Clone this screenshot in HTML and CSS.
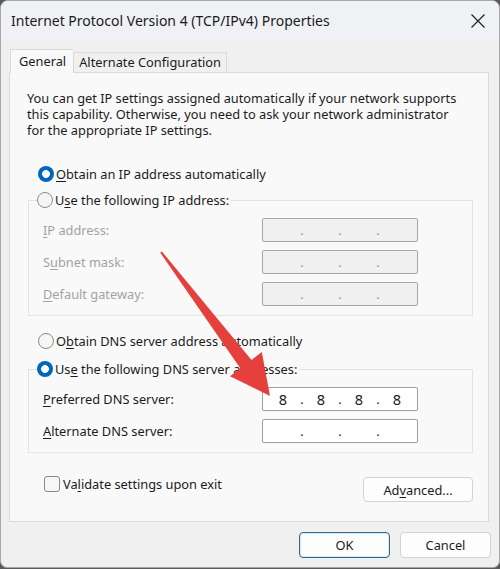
FILE: index.html
```html
<!DOCTYPE html>
<html>
<head>
<meta charset="utf-8">
<link rel="stylesheet" href="styles.css">
</head>
<body>
<div class="window">
  <div class="titlebar">
    <span class="title">Internet Protocol Version 4 (TCP/IPv4) Properties</span>
    <svg class="close" width="14" height="14" viewBox="0 0 14 14"><path d="M0.5 0.5 L13.5 13.5 M13.5 0.5 L0.5 13.5" stroke="#1b1b1b" stroke-width="1.1" fill="none"/></svg>
  </div>
  <div class="tabs">
    <div class="tab active">General</div>
    <div class="tab">Alternate Configuration</div>
  </div>
  <div class="panel">
    <p class="intro">You can get IP settings assigned automatically if your network supports<br>this capability. Otherwise, you need to ask your network administrator<br>for the appropriate IP settings.</p>
    <div class="option first"><span class="radio on"></span><span><u>O</u>btain an IP address automatically</span></div>
    <fieldset class="group">
      <legend><span class="radio"></span><span>U<u>s</u>e the following IP address:</span></legend>
      <div class="field disabled"><span><u>I</u>P address:</span><div class="ip"><span class="oct"></span><span class="dot">.</span><span class="oct"></span><span class="dot">.</span><span class="oct"></span><span class="dot">.</span><span class="oct"></span></div></div>
      <div class="field disabled"><span>S<u>u</u>bnet mask:</span><div class="ip"><span class="oct"></span><span class="dot">.</span><span class="oct"></span><span class="dot">.</span><span class="oct"></span><span class="dot">.</span><span class="oct"></span></div></div>
      <div class="field disabled"><span><u>D</u>efault gateway:</span><div class="ip"><span class="oct"></span><span class="dot">.</span><span class="oct"></span><span class="dot">.</span><span class="oct"></span><span class="dot">.</span><span class="oct"></span></div></div>
    </fieldset>
    <div class="option dns"><span class="radio"></span><span>O<u>b</u>tain DNS server address automatically</span></div>
    <fieldset class="group g2">
      <legend><span class="radio on"></span><span>Us<u>e</u> the following DNS server addresses:</span></legend>
      <div class="field"><span><u>P</u>referred DNS server:</span><div class="ip"><span class="oct">8</span><span class="dot">.</span><span class="oct">8</span><span class="dot">.</span><span class="oct">8</span><span class="dot">.</span><span class="oct">8</span></div></div>
      <div class="field"><span><u>A</u>lternate DNS server:</span><div class="ip"><span class="oct"></span><span class="dot">.</span><span class="oct"></span><span class="dot">.</span><span class="oct"></span><span class="dot">.</span><span class="oct"></span></div></div>
    </fieldset>
    <div class="bottom-row">
      <div class="check-row"><span class="checkbox"></span><span>Va<u>l</u>idate settings upon exit</span></div>
      <button class="btn adv">Ad<u>v</u>anced...</button>
    </div>
  </div>
  <div class="footer">
    <button class="btn ok">OK</button>
    <button class="btn">Cancel</button>
  </div>
  <svg class="arrow" width="500" height="569" viewBox="0 0 500 569">
    <polygon points="161.8,251.4 251.5,359.9 261.8,352 270,396 230,376.2 240.3,368.3 160.2,252.6" fill="#e5403b"/>
  </svg>
</div>
</body>
</html>
```
FILE: styles.css
```css
* { box-sizing: border-box; }
html, body { margin: 0; padding: 0; }
body {
  width: 500px;
  height: 569px;
  background: #5a5a5a;
  font-family: "Noto Sans", "Open Sans", sans-serif;
  font-size: 12.8px;
  color: #1b1b1b;
}
.window {
  position: relative;
  width: 500px;
  height: 568px;
  background: #f0f0f0;
  border: 1px solid #a8a8a8;
  border-radius: 8px 8px 7px 7px;
  overflow: hidden;
}
.titlebar {
  height: 39px;
  display: flex;
  align-items: center;
  justify-content: space-between;
  padding: 0 14px 0 10px;
  background: #eff1f4;
}
.title { font-size: 14px; }
.tabs {
  display: flex;
  align-items: flex-end;
  padding-left: 9px;
  margin-top: 9px;
  height: 23px;
}
.tab {
  height: 20px;
  padding: 0 5px;
  line-height: 19px;
  border: 1px solid #dadada;
  border-bottom: none;
  background: #f0f0f0;
}
.tab.active {
  height: 24px;
  margin-bottom: -1px;
  padding: 0 7px 0 8px;
  line-height: 22px;
  background: #f9f9f9;
  position: relative;
  z-index: 1;
  border-right: none;
}
.panel {
  margin: 0 10px 0 8px;
  height: 450px;
  background: #f9f9f9;
  border: 1px solid #dadada;
  padding-top: 17px;
}
.intro {
  margin: 0;
  padding-left: 17px;
  line-height: 16px;
  height: 48px;
}
.option {
  display: flex;
  align-items: center;
  height: 16px;
  padding-left: 28px;
  gap: 2px;
}
.option.first { margin-top: 28px; }
.option.dns { margin-top: 17px; }
.radio {
  width: 16px;
  height: 16px;
  border-radius: 50%;
  border: 1px solid #8a8a8a;
  background: #f6f6f6;
  flex: none;
}
.radio.on {
  border: none;
  background: radial-gradient(circle, #ffffff 0 3.6px, #0067c0 4.2px);
}
.group {
  margin: 10px 15px 0 18px;
  padding: 0 0 9px 0;
  border: 1px solid #e3e3e3;
  min-width: 0;
}
.group.g2 { margin-top: 12px; }
.group legend {
  display: flex;
  align-items: center;
  gap: 2px;
  height: 16px;
  padding: 0 2px 0 0;
  margin-left: 8px;
  background: #f9f9f9;
}
.field {
  display: flex;
  align-items: center;
  justify-content: space-between;
  height: 24px;
  margin-top: 8px;
  padding-left: 14px;
  padding-right: 54px;
}
.field:first-of-type { margin-top: 10px; }
.field.disabled { color: #a3a3a3; }
.ip {
  display: flex;
  align-items: center;
  width: 156px;
  height: 24px;
  padding-left: 5px;
  background: #ffffff;
  border: 1px solid #a0a0a0;
  border-radius: 2px;
  color: #1b1b1b;
}
.field.disabled .ip {
  background: #f0f0f0;
  border-color: #a6a6a6;
  color: #8c8c8c;
}
.oct { width: 30px; text-align: center; font-size: 14.5px; }
.dot { width: 8px; text-align: center; }
.bottom-row {
  display: flex;
  justify-content: space-between;
  align-items: flex-start;
  margin: 23px 15px 0 34px;
}
.check-row {
  display: flex;
  align-items: center;
  gap: 3px;
  height: 16px;
}
.checkbox {
  width: 16px;
  height: 16px;
  border: 1px solid #8a8a8a;
  border-radius: 3px;
  background: #f6f6f6;
}
.btn {
  font-family: inherit;
  font-size: 12.8px;
  color: #1b1b1b;
  background: #fdfdfd;
  border: 1px solid #d2d2d2;
  border-radius: 4px;
  padding: 0;
  height: 26px;
}
.adv { width: 110px; height: 25px; margin-top: 1px; }
.footer {
  display: flex;
  justify-content: flex-end;
  gap: 10px;
  padding: 10px 8px 0 0;
}
.footer .btn { width: 91px; }
.ok {
  border: 1px solid #2f6b97;
  box-shadow: inset 0 0 0 1px #d8e6f1;
}
u { text-decoration-thickness: 1px; text-underline-offset: 2px; }
.arrow {
  position: absolute;
  left: -1px;
  top: -1px;
  pointer-events: none;
}
```
